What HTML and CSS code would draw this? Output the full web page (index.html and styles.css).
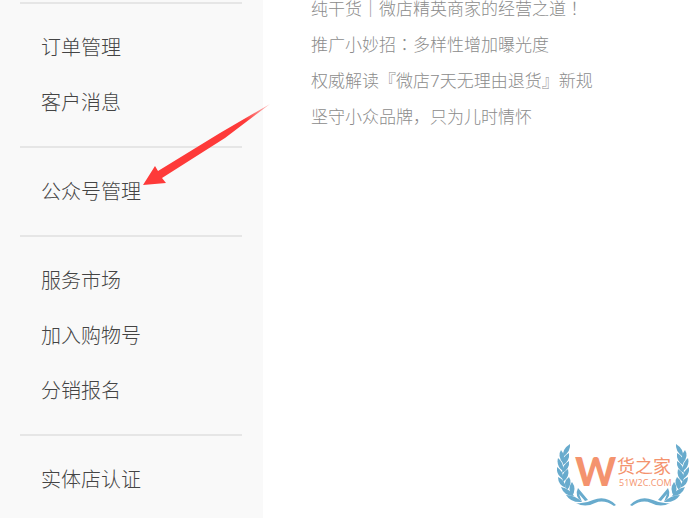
FILE: index.html
```
<!DOCTYPE html>
<html lang="zh-CN">
<head>
    <meta charset="UTF-8">
    <title>微店</title>
    <link rel="stylesheet" href="styles.css">
</head>
<body>
<div class="page">
    <nav class="sidebar">
        <div class="menu-group">
            <a href="#">订单管理</a>
            <a href="#">客户消息</a>
        </div>
        <div class="menu-group">
            <a href="#">公众号管理</a>
        </div>
        <div class="menu-group">
            <a href="#">服务市场</a>
            <a href="#">加入购物号</a>
            <a href="#">分销报名</a>
        </div>
        <div class="menu-group">
            <a href="#">实体店认证</a>
        </div>
    </nav>

    <main class="content">
        <ul class="article-list">
            <li><a href="#">纯干货｜微店精英商家的经营之道<span class="mark" lang="zh-Hant">！</span></a></li>
            <li><a href="#">推广小妙招<span class="mark" lang="zh-Hant">：</span>多样性增加曝光度</a></li>
            <li><a href="#">权威解读『微店7天无理由退货』新规</a></li>
            <li><a href="#">坚守小众品牌，只为儿时情怀</a></li>
        </ul>
    </main>

    <svg class="arrow" width="128" height="84" viewBox="0 0 128 84" aria-hidden="true">
        <defs>
            <linearGradient id="fade" x1="0" y1="1" x2="1" y2="0">
                <stop offset="0.8" stop-color="#fe3a39"/>
                <stop offset="1" stop-color="#fe3a39" stop-opacity="0.3"/>
            </linearGradient>
        </defs>
        <path fill="url(#fade)" d="M0 82 L12 63 L15 68 L77 30 L127 1 L82 35 L19 75 L23 80 Z"/>
    </svg>

    <svg class="logo" width="132" height="64" viewBox="0 0 132 64" role="img" aria-label="货之家">
        <defs>
            <g id="branch">
                <!-- outer leaves -->
                <path d="M6 13 Q5 5 13 0 Q14 7 6 13Z"/>
                <path d="M6 19 Q0 12 4 6 Q9 12 6 19Z"/>
                <path d="M6 27 Q-1 22 1 14 Q7 19 6 27Z"/>
                <path d="M6 35 Q-1 31 0 23 Q7 28 6 35Z"/>
                <path d="M9 44 Q1 41 1 33 Q8 36 9 44Z"/>
                <path d="M17 52 Q7 52 4 43 Q13 45 17 52Z"/>
                <path d="M25 58 Q14 59 9 51 Q18 51 25 58Z"/>
                <!-- inner leaves -->
                <path d="M6 21 Q4 13 12 9 Q13 17 6 21Z"/>
                <path d="M5 29 Q5 21 12 17 Q13 25 5 29Z"/>
                <path d="M6 38 Q3 30 11 25 Q13 33 6 38Z"/>
                <path d="M10 46 Q5 38 12 33 Q16 39 10 46Z"/>
                <path d="M15 52 Q10 44 15 38 Q20 45 15 52Z"/>
                <path d="M25 58 Q17 52 21 44 L31 56 L28 57 L22 50Z"/>
                <!-- ribbon -->
                <path d="M19 59 Q28 60 36 56 Q49 51 59 61 L57 62 Q47 55 38 59 Q28 64 19 59Z"/>
            </g>
        </defs>
        <g fill="#68abcd">
            <use href="#branch"/>
            <use href="#branch" transform="translate(132 0) scale(-1 1)"/>
        </g>
        <g fill="#f4936e">
            <text class="logo-letter" x="18" y="42">W</text>
            <text class="logo-name" x="60" y="29">货之家</text>
            <text class="logo-site" x="62" y="42">51W2C.COM</text>
        </g>
    </svg>
</div>
</body>
</html>
```
FILE: styles.css
```
body {
    margin: 0;
    background-color: #fff;
    font-family: "Noto Sans", "Noto Sans CJK SC", sans-serif;
    font-weight: 300;
}

a {
    color: inherit;
    text-decoration: none;
}

.page {
    position: relative;
    display: flex;
    min-height: 100vh;
    overflow: hidden;
}

.sidebar {
    box-sizing: border-box;
    flex: 0 0 263px;
    padding: 2px 21px 0 20px;
    background-color: #f9f9f9;
    color: #444;
    font-size: 20px;
    line-height: 55px;
}

.menu-group {
    padding: 16px 21px;
    border-top: 2px solid #e6e6e6;
}

.menu-group:last-child {
    padding-bottom: 0;
}

.menu-group a {
    display: block;
}

.menu-group a:hover {
    color: #fe3a39;
}

.content {
    flex: 1;
    padding-left: 48px;
}

.article-list {
    margin: -9px 0 0;
    padding: 0;
    list-style: none;
    color: #8c8c8c;
    font-size: 17px;
    line-height: 36px;
    white-space: nowrap;
}

.mark {
    font-family: "Noto Sans CJK TC", sans-serif;
    line-height: 1;
}

.arrow {
    position: absolute;
    top: 103px;
    left: 143px;
}

.logo {
    position: absolute;
    right: 11px;
    bottom: 10px;
}

.logo-letter {
    font-family: Lato, sans-serif;
    font-size: 39px;
    font-weight: 900;
}

.logo-name {
    font-family: "Noto Sans CJK SC", sans-serif;
    font-size: 18px;
    font-weight: 400;
}

.logo-site {
    font-family: "Open Sans", sans-serif;
    font-size: 9px;
    font-weight: 400;
}
```
